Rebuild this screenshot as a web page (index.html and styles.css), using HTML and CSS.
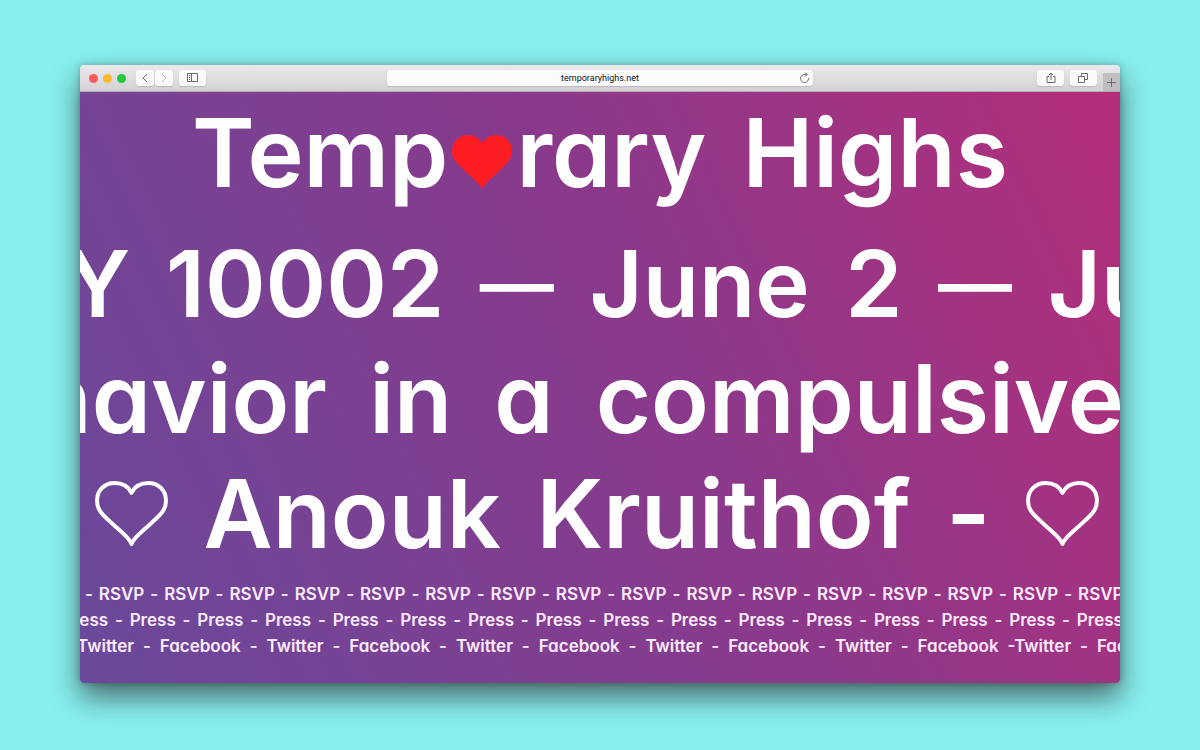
FILE: index.html
```html
<!DOCTYPE html>
<html lang="en">
<head>
<meta charset="utf-8">
<meta name="viewport" content="width=device-width, initial-scale=1">
<title>Temporary Highs</title>
<link rel="stylesheet" href="styles.css">
</head>
<body>
<svg class="defs" aria-hidden="true">
  <symbol id="heart" viewBox="0 0 74 67"><path d="M37 64C35 57 24 50 14 40C6 33 2 28 2 20C2 9 10 2 20 2C28 2 34 6 37 12C40 6 46 2 54 2C64 2 72 9 72 20C72 28 68 33 60 40C50 50 39 57 37 64Z"/></symbol>
  <symbol id="heart-solid" viewBox="0 0 60 54"><path d="M30 54C27 47 14 38 7 30C2 25 0 21 0 16C0 7 7 0 16 0C22 0 27 3 30 8C33 3 38 0 44 0C53 0 60 7 60 16C60 21 58 25 53 30C46 38 33 47 30 54Z"/></symbol>
</svg>
<div class="window">
  <header class="toolbar">
    <div class="tools">
      <div class="lights"><span class="light red"></span><span class="light amber"></span><span class="light green"></span></div>
      <div class="pair">
        <button class="tool" aria-label="Back"><svg width="8" height="12" viewBox="0 0 8 12"><path d="M6 2 2 6l4 4"/></svg></button>
        <button class="tool faint" aria-label="Forward"><svg width="8" height="12" viewBox="0 0 8 12"><path d="m2 2 4 4-4 4"/></svg></button>
      </div>
      <button class="tool" aria-label="Sidebar"><svg width="12" height="10" viewBox="0 0 12 10"><path d="M.5.5h10v8H.5zM4.500.5v8M2 2.500h1M2 4.500h1M2 6.500h1"/></svg></button>
    </div>
    <div class="address">
      <input class="url" type="text" value="temporaryhighs.net" aria-label="Address">
      <button class="reload" aria-label="Reload"><svg width="10" height="12" viewBox="0 0 10 12"><path d="M8.500 6A4 4 0 1 1 4.500 2.500H7M5 .5l2 2-2 2"/></svg></button>
    </div>
    <div class="tools end">
      <button class="tool" aria-label="Share"><svg width="10" height="12" viewBox="0 0 10 12"><path d="M3 4.500H1v6h8v-6H7M5 8V1M3 3l2-2 2 2"/></svg></button>
      <button class="tool" aria-label="Tabs"><svg width="11" height="11" viewBox="0 0 11 11"><path d="M3.500 3.500v-3h6v6h-3M.5 3.500h6v6h-6z"/></svg></button>
      <button class="newtab" aria-label="New tab"><svg width="9" height="9" viewBox="0 0 9 9"><path d="M4.500 0v9M0 4.500h9"/></svg></button>
    </div>
  </header>
  <main class="page">
    <h1 class="title"><span class="brand">Temp<svg class="solid" role="img" aria-label="o"><use href="#heart-solid"/></svg>rary</span><span>Highs</span></h1>
    <p class="row dates"><span>NY</span><span>10002</span><span class="dash">—</span><span>June</span><span>2</span><span class="dash">—</span><span>June</span></p>
    <p class="row theme"><span>behavior</span><span>in</span><span>a</span><span>compulsive</span></p>
    <p class="row artist"><svg class="outline" aria-hidden="true"><use href="#heart"/></svg><span>Anouk</span><span>Kruithof</span><span>-</span><svg class="outline" aria-hidden="true"><use href="#heart"/></svg></p>
    <nav class="links">
      <div class="strip rsvp"><span>-</span><a href="#">RSVP</a><span>-</span><a href="#">RSVP</a><span>-</span><a href="#">RSVP</a><span>-</span><a href="#">RSVP</a><span>-</span><a href="#">RSVP</a><span>-</span><a href="#">RSVP</a><span>-</span><a href="#">RSVP</a><span>-</span><a href="#">RSVP</a><span>-</span><a href="#">RSVP</a><span>-</span><a href="#">RSVP</a><span>-</span><a href="#">RSVP</a><span>-</span><a href="#">RSVP</a><span>-</span><a href="#">RSVP</a><span>-</span><a href="#">RSVP</a><span>-</span><a href="#">RSVP</a><span>-</span><a href="#">RSVP</a></div>
      <div class="strip press"><a href="#">Press</a><span>-</span><a href="#">Press</a><span>-</span><a href="#">Press</a><span>-</span><a href="#">Press</a><span>-</span><a href="#">Press</a><span>-</span><a href="#">Press</a><span>-</span><a href="#">Press</a><span>-</span><a href="#">Press</a><span>-</span><a href="#">Press</a><span>-</span><a href="#">Press</a><span>-</span><a href="#">Press</a><span>-</span><a href="#">Press</a><span>-</span><a href="#">Press</a><span>-</span><a href="#">Press</a><span>-</span><a href="#">Press</a><span>-</span><a href="#">Press</a></div>
      <div class="strip social"><a href="#">Twitter</a><span>-</span><a href="#">Facebook</a><span>-</span><a href="#">Twitter</a><span>-</span><a href="#">Facebook</a><span>-</span><a href="#">Twitter</a><span>-</span><a href="#">Facebook</a><span>-</span><a href="#">Twitter</a><span>-</span><a href="#">Facebook</a><span>-</span><a href="#">Twitter</a><span>-</span><a href="#">Facebook</a><span>-<a href="#">Twitter</a></span><span>-</span><a href="#">Facebook</a></div>
    </nav>
  </main>
</div>
</body>
</html>
```
FILE: styles.css
```css
* { box-sizing: border-box; }
body {
  margin: 0;
  min-height: 100vh;
  padding: 65px 80px;
  background: #87efed;
  font-family: Inter, "Open Sans", sans-serif;
}
.defs { position: absolute; width: 0; height: 0; }
.window {
  overflow: hidden;
  border-radius: 4px;
  box-shadow: 0 14px 28px rgba(30, 20, 20, .6), 0 0 6px rgba(0, 0, 0, .25);
}
.toolbar {
  display: grid;
  grid-template-columns: 1fr 41% 1fr;
  align-items: center;
  height: 27px;
  background: linear-gradient(#ebe9eb, #d3d1d3);
  border-bottom: 1px solid #b5a9b4;
}
.toolbar button { border: 0; padding: 0; display: flex; align-items: center; justify-content: center; }
.toolbar svg { fill: none; stroke: #6d6b6d; stroke-width: 1; }
.tools { display: flex; align-items: center; gap: 6px; padding-left: 9px; height: 100%; }
.end { justify-content: flex-end; padding: 0; }
.lights { display: flex; gap: 5px; padding-right: 4px; }
.light { width: 9px; height: 9px; border-radius: 50%; }
.red { background: #fc5b57; }
.amber { background: #fbb92d; }
.green { background: #24c83c; }
.pair { display: flex; gap: 1px; }
.tool { width: 27px; height: 16px; border-radius: 3px; background: #fafafa; box-shadow: 0 1px 1px #bbb8bb; }
.pair .tool { width: 18px; }
.toolbar .faint svg { stroke: #bdbbbd; }
.newtab { align-self: flex-end; width: 17px; height: 18px; background: #c0bec0; }
.address {
  display: flex;
  height: 16px;
  border-radius: 3px;
  background: #fbfbfb;
  box-shadow: 0 1px 1px #bbb8bb;
}
.url {
  flex: 1;
  min-width: 0;
  border: 0;
  padding: 0 0 0 17px;
  background: none;
  font: 400 9px Roboto, Inter, sans-serif;
  text-align: center;
  color: #111;
}
.reload { width: 17px; background: none; }
.page {
  overflow: hidden;
  padding: 3px 0 24px;
  background: linear-gradient(65deg, #69499b, #8a398b 55%, #b42e7b);
  color: #fff;
}
.title, .row {
  display: flex;
  align-items: center;
  margin: 0;
  font-size: 95px;
  font-weight: 600;
  line-height: 115px;
  white-space: nowrap;
  font-feature-settings: "cv11";
}
.title { justify-content: center; gap: 36px; padding-bottom: 16px; }
.brand { display: flex; align-items: center; }
.solid { width: 60px; height: 54px; margin: 18px 4px 0; fill: #ff1d24; }
.row { justify-content: space-between; }
.row.dates { font-size: 92px; }
.row .dash { font-size: 74px; }
.dates { margin: 0 -148px 0 -85px; }
.theme { margin: 0 -4px 0 -162px; }
.artist { margin: 0 21px 0 15px; }
.outline { width: 73px; height: 66px; fill: none; stroke: #fff; stroke-width: 4; stroke-linejoin: round; }
.links { padding-top: 10px; }
.strip {
  display: flex;
  justify-content: space-between;
  font-size: 17px;
  font-weight: 600;
  line-height: 26px;
  white-space: nowrap;
  color: #fbeaff;
  font-feature-settings: "cv11";
}
.strip a { color: inherit; text-decoration: none; }
.rsvp { margin: 0 -4px 0 5px; }
.press { margin: 0 -3px 0 -18px; }
.social { margin: 0 -58px 0 -3px; }
```
